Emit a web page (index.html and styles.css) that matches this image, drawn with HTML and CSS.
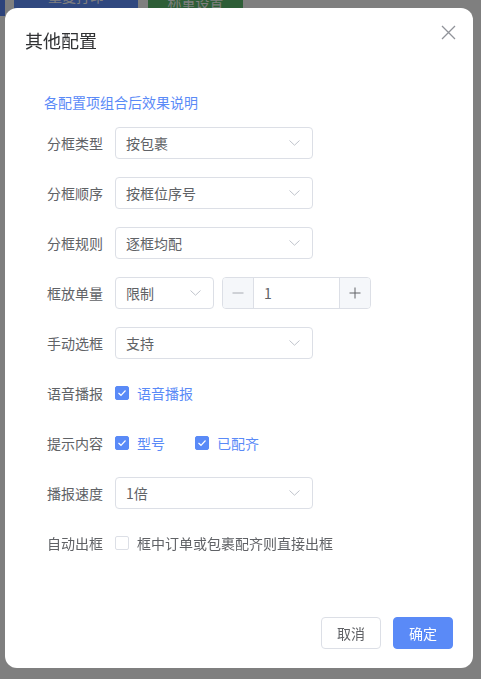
FILE: index.html
```html
<!DOCTYPE html>
<html lang="zh">
<head>
<meta charset="utf-8">
<title>其他配置</title>
<link rel="stylesheet" href="styles.css">
</head>
<body>
<div class="page">
  <div class="side-strip"></div>
  <div class="toolbar">
    <button class="bg-btn bg-blue">重复打印（F10）</button>
    <button class="bg-btn bg-green">称重设置</button>
  </div>
</div>
<div class="overlay">
  <div class="dialog">
    <div class="dialog-header">
      <span class="dialog-title">其他配置</span>
      <svg class="close" width="15" height="15" viewBox="0 0 15 15"><path d="M1 1L14 14M14 1L1 14" stroke="#909399" stroke-width="1.3" fill="none"/></svg>
    </div>
    <div class="dialog-body">
      <a class="help-link">各配置项组合后效果说明</a>
      <div class="form-row">
        <label class="form-label">分框类型</label>
        <div class="select"><span>按包裹</span><svg class="chev" width="11" height="6" viewBox="0 0 11 6"><path d="M0.5 0.5L5.5 5.2L10.5 0.5" stroke="#c0c4cc" stroke-width="1" fill="none"/></svg></div>
      </div>
      <div class="form-row">
        <label class="form-label">分框顺序</label>
        <div class="select"><span>按框位序号</span><svg class="chev" width="11" height="6" viewBox="0 0 11 6"><path d="M0.5 0.5L5.5 5.2L10.5 0.5" stroke="#c0c4cc" stroke-width="1" fill="none"/></svg></div>
      </div>
      <div class="form-row">
        <label class="form-label">分框规则</label>
        <div class="select"><span>逐框均配</span><svg class="chev" width="11" height="6" viewBox="0 0 11 6"><path d="M0.5 0.5L5.5 5.2L10.5 0.5" stroke="#c0c4cc" stroke-width="1" fill="none"/></svg></div>
      </div>
      <div class="form-row">
        <label class="form-label">框放单量</label>
        <div class="select select-small"><span>限制</span><svg class="chev" width="11" height="6" viewBox="0 0 11 6"><path d="M0.5 0.5L5.5 5.2L10.5 0.5" stroke="#c0c4cc" stroke-width="1" fill="none"/></svg></div>
        <div class="number">
          <span class="num-btn num-minus"><svg width="12" height="12" viewBox="0 0 12 12"><path d="M0.5 6H11.5" stroke="#a8abb2" stroke-width="1" fill="none"/></svg></span>
          <span class="num-value">1</span>
          <span class="num-btn num-plus"><svg width="12" height="12" viewBox="0 0 12 12"><path d="M0.5 6H11.5M6 0.5V11.5" stroke="#606266" stroke-width="1" fill="none"/></svg></span>
        </div>
      </div>
      <div class="form-row">
        <label class="form-label">手动选框</label>
        <div class="select"><span>支持</span><svg class="chev" width="11" height="6" viewBox="0 0 11 6"><path d="M0.5 0.5L5.5 5.2L10.5 0.5" stroke="#c0c4cc" stroke-width="1" fill="none"/></svg></div>
      </div>
      <div class="form-row">
        <label class="form-label">语音播报</label>
        <span class="checkbox checked"><span class="box"><svg width="10" height="8" viewBox="0 0 10 8"><path d="M1.5 4L4 6.3L8.5 1.5" stroke="#fff" stroke-width="1.2" fill="none"/></svg></span><span class="cb-label">语音播报</span></span>
      </div>
      <div class="form-row">
        <label class="form-label">提示内容</label>
        <span class="checkbox checked"><span class="box"><svg width="10" height="8" viewBox="0 0 10 8"><path d="M1.5 4L4 6.3L8.5 1.5" stroke="#fff" stroke-width="1.2" fill="none"/></svg></span><span class="cb-label">型号</span></span>
        <span class="checkbox checked"><span class="box"><svg width="10" height="8" viewBox="0 0 10 8"><path d="M1.5 4L4 6.3L8.5 1.5" stroke="#fff" stroke-width="1.2" fill="none"/></svg></span><span class="cb-label">已配齐</span></span>
      </div>
      <div class="form-row">
        <label class="form-label">播报速度</label>
        <div class="select"><span>1倍</span><svg class="chev" width="11" height="6" viewBox="0 0 11 6"><path d="M0.5 0.5L5.5 5.2L10.5 0.5" stroke="#c0c4cc" stroke-width="1" fill="none"/></svg></div>
      </div>
      <div class="form-row">
        <label class="form-label">自动出框</label>
        <span class="checkbox"><span class="box"></span><span class="cb-label">框中订单或包裹配齐则直接出框</span></span>
      </div>
    </div>
    <div class="dialog-footer">
      <button class="btn btn-default">取消</button>
      <button class="btn btn-primary">确定</button>
    </div>
  </div>
</div>
</body>
</html>
```
FILE: styles.css
```css
* { box-sizing: border-box; }
html, body { margin: 0; padding: 0; }
body {
  width: 481px;
  height: 679px;
  overflow: hidden;
  background: #ffffff;
  font-family: "Noto Sans CJK SC", "Noto Sans", sans-serif;
  font-size: 14px;
  color: #606266;
}
.page { position: relative; height: 679px; }
.side-strip {
  position: absolute;
  left: 0; top: 0;
  width: 5px; height: 30px;
  background: #5b87f7;
}
.toolbar {
  display: flex;
  gap: 10px;
  padding-left: 14px;
  margin-top: -14px;
}
.bg-btn {
  height: 32px;
  border: none;
  border-radius: 3px;
  color: #ffffff;
  font-family: inherit;
  font-size: 14px;
  padding: 0 14px;
}
.bg-blue { background: #6090ff; width: 124px; }
.bg-green { background: #5cbd6e; width: 95px; }

.overlay {
  position: fixed;
  inset: 0;
  background: rgba(0, 0, 0, 0.5);
}
.dialog {
  position: absolute;
  left: 5px;
  top: 8px;
  width: 468px;
  height: 660px;
  background: #ffffff;
  border-radius: 12px;
  display: flex;
  flex-direction: column;
}
.dialog-header {
  position: relative;
  padding: 20px 20px 10px;
}
.dialog-title {
  display: block;
  font-size: 18px;
  line-height: 24px;
  color: #303133;
}
.close {
  position: absolute;
  left: 436px;
  top: 17px;
}
.dialog-body {
  flex: 1;
  padding: 30px 20px 0;
}
.help-link {
  display: block;
  margin-left: 19px;
  line-height: 20px;
  color: #5a8af7;
  margin-bottom: 15px;
}
.form-row {
  display: flex;
  align-items: center;
  height: 32px;
  margin-bottom: 18px;
}
.form-label {
  width: 90px;
  padding-right: 12px;
  text-align: right;
  color: #606266;
  flex-shrink: 0;
}
.select {
  width: 198px;
  height: 32px;
  border: 1px solid #dcdfe6;
  border-radius: 4px;
  display: flex;
  align-items: center;
  justify-content: space-between;
  padding: 0 12px 0 10px;
  color: #606266;
}
.select-small { width: 99px; }
.chev { display: block; }
.number {
  margin-left: 8px;
  width: 149px;
  height: 32px;
  border: 1px solid #dcdfe6;
  border-radius: 4px;
  display: flex;
  overflow: hidden;
}
.num-btn {
  width: 31px;
  background: #f5f7fa;
  display: flex;
  align-items: center;
  justify-content: center;
  flex-shrink: 0;
}
.num-minus { border-right: 1px solid #dcdfe6; }
.num-plus { border-left: 1px solid #dcdfe6; }
.num-value {
  flex: 1;
  padding-left: 10px;
  line-height: 30px;
  color: #606266;
}
.checkbox {
  display: inline-flex;
  align-items: center;
  margin-right: 30px;
}
.box {
  width: 14px;
  height: 14px;
  border: 1px solid #dcdfe6;
  border-radius: 2px;
  background: #ffffff;
  display: flex;
  align-items: center;
  justify-content: center;
}
.checked .box {
  background: #5a8af7;
  border-color: #5a8af7;
}
.cb-label {
  margin-left: 8px;
  color: #606266;
}
.checked .cb-label { color: #5a8af7; }
.dialog-footer {
  display: flex;
  justify-content: flex-end;
  gap: 12px;
  padding: 0 20px 19px;
}
.btn {
  width: 60px;
  height: 32px;
  border-radius: 4px;
  font-family: inherit;
  font-size: 14px;
  padding: 0;
}
.btn-default {
  background: #ffffff;
  border: 1px solid #dcdfe6;
  color: #606266;
}
.btn-primary {
  background: #5a8af7;
  border: 1px solid #5a8af7;
  color: #ffffff;
}
```
